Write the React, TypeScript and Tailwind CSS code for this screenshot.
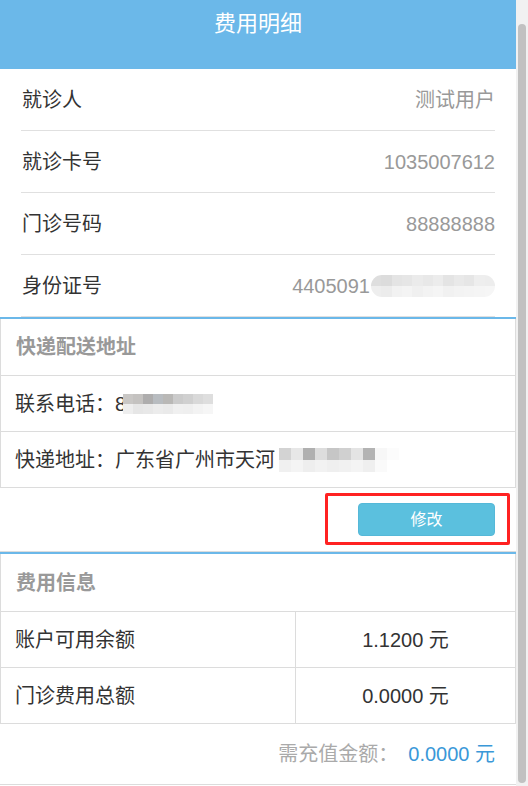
import React from 'react';

const font = { fontFamily: '"Liberation Sans", "Noto Sans CJK SC", sans-serif' };

const Mosaic: React.FC<{ top: string[]; bottom: string[]; cell: number; className?: string }> = ({ top, bottom, cell, className }) => (
  <span className={`inline-flex flex-col overflow-hidden rounded-full align-middle ${className ?? ''}`}>
    {[top, bottom].map((row, r) => (
      <span key={r} className="flex">
        {row.map((c, i) => (
          <span key={i} style={{ background: c, width: cell, height: cell }} />
        ))}
      </span>
    ))}
  </span>
);

const patient = [
  { label: '就诊人', value: '测试用户' },
  { label: '就诊卡号', value: '1035007612' },
  { label: '门诊号码', value: '88888888' },
];

const App: React.FC = () => {
  return (
    <div className="flex h-screen w-full overflow-hidden bg-white" style={font}>
      <div className="flex-1">
        <div className="h-[69px] bg-[#6bb8e9] pt-[7px] text-center text-[22px] text-white">费用明细</div>

        <div className="mx-[21px]">
          {patient.map((p) => (
            <div key={p.label} className="flex h-[62px] items-center justify-between border-b border-[#e0e0e0] pl-[1px] text-[20px]">
              <span className="text-[#333]">{p.label}</span>
              <span className="text-[#999]">{p.value}</span>
            </div>
          ))}
          <div className="flex h-[62px] items-center justify-between border-b border-[#e0e0e0] pl-[1px] text-[20px]">
            <span className="text-[#333]">身份证号</span>
            <span className="flex items-center text-[#999]">
              4405091
              <Mosaic
                cell={11}
                className="ml-[1px] w-[124px]"
                top={['#dedede', '#dcdcdc', '#e4e4e4', '#e6e6e6', '#ebebeb', '#e8e8e8', '#ececec', '#e4e4e4', '#e9e9e9', '#e6e6e6', '#eeeeee', '#ededed']}
                bottom={['#eeeeee', '#ececec', '#f2f2f2', '#f4f4f4', '#f0f0f0', '#f3f3f3', '#f5f5f5', '#f1f1f1', '#f3f3f3', '#f4f4f4', '#f5f5f5', '#f6f6f6']}
              />
            </span>
          </div>
        </div>

        <div className="border-t-2 border-[#6bb8e9]">
          <div className="border-x border-[#dcdcdc]">
            <div className="flex h-[57px] items-center border-b border-[#dcdcdc] pl-[15px] text-[20px] font-bold text-[#999]">快递配送地址</div>
            <div className="flex h-[56px] items-center border-b border-[#dcdcdc] pl-[14px] text-[20px] text-[#333]">
              联系电话：<span className="text-[#333]">8</span>
              <Mosaic
                cell={10}
                className="-ml-[3px] w-[100px] rounded-none"
                top={['#c9c7c5', '#c4c2c0', '#aeadad', '#b8bcc0', '#b9b8b6', '#cbcbcb', '#d0d0d0', '#d9d9d9', '#dedede', '#ffffff']}
                bottom={['#eeeeee', '#e6e6e6', '#e8e8e8', '#ececec', '#eaeaea', '#f0f0f0', '#efefef', '#f3f3f3', '#f6f6f6', '#ffffff']}
              />
            </div>
            <div className="flex h-[56px] items-center border-b border-[#dcdcdc] pl-[14px] text-[20px] text-[#333]">
              快递地址：广东省广州市天河
              <Mosaic
                cell={12}
                className="ml-[4px] w-[120px] rounded-none"
                top={['#d3d3d3', '#e7e7e7', '#b0b0b0', '#dddddd', '#c6c6c6', '#d0d0d0', '#e4e4e4', '#b3b3b3', '#f7f7f7', '#fcfcfc']}
                bottom={['#f0f0f0', '#f4f4f4', '#eeeeee', '#f2f2f2', '#efefef', '#f1f1f1', '#f4f4f4', '#efefef', '#fafafa', '#ffffff']}
              />
            </div>
          </div>
          <div className="flex h-[64px] items-center justify-end border-b border-[#dcdcdc] pr-[21px]">
            <div className="relative">
              <button className="h-[33px] w-[137px] rounded-[4px] border border-[#55b8d8] bg-[#5bc0de] text-[16px] text-white">修改</button>
              <div className="pointer-events-none absolute -top-[10px] -left-[33px] -right-[15px] -bottom-[9px] rounded-[2px] border-[3px] border-[#ff2222]" />
            </div>
          </div>
        </div>

        <div className="border-t-2 border-[#6bb8e9]">
          <div className="border-x border-[#dcdcdc]">
            <div className="flex h-[58px] items-center border-b border-[#dcdcdc] pl-[15px] text-[20px] font-bold text-[#999]">费用信息</div>
            {[
              ['账户可用余额', '1.1200 元'],
              ['门诊费用总额', '0.0000 元'],
            ].map(([k, v]) => (
              <div key={k} className="flex h-[56px] border-b border-[#dcdcdc] text-[20px] text-[#333]">
                <div className="flex w-[295px] items-center border-r border-[#dcdcdc] pl-[14px]">{k}</div>
                <div className="flex flex-1 items-center justify-center">{v}</div>
              </div>
            ))}
          </div>
          <div className="flex h-[61px] items-center justify-end border-b border-[#dcdcdc] pr-[21px] text-[20px]">
            <span className="text-[#aaa]">需充值金额：</span>
            <span className="ml-[10px] text-[#3a98d8]">0.0000 元</span>
          </div>
        </div>
      </div>

      <div className="flex w-[12px] flex-col bg-[#f1f1f1] px-[2px] pt-[24px] pb-[3px]">
        <div className="flex-1 rounded-full bg-[#c1c1c1]" />
      </div>
    </div>
  );
};

export default App;
